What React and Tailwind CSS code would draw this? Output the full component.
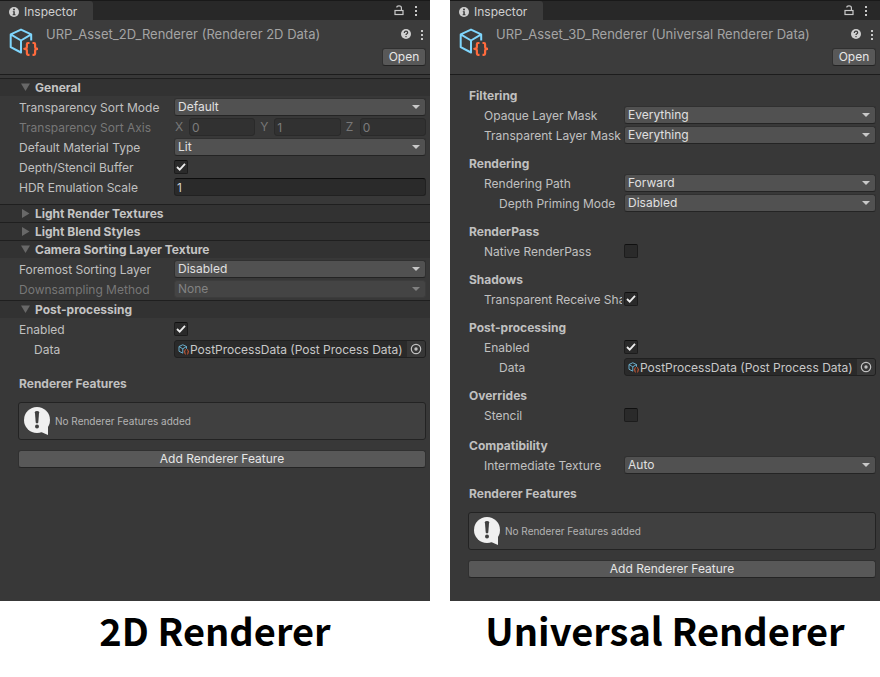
import { useId, useState } from "react";

const INDENT = { 0: "pl-0", 1: "pl-[15px]", 2: "pl-[30px]" };

function InfoIcon() {
  return (
    <svg viewBox="0 0 10 10" className="size-[10px]" aria-hidden="true">
      <circle cx="5" cy="5" r="5" fill="#d0d0d0" />
      <circle cx="5" cy="2.4" r="1" fill="#3a3a3a" />
      <path d="M3.8 4.2H5.8V7.3H6.5V8.2H3.6V7.3H4.3V5.1H3.8Z" fill="#3a3a3a" />
    </svg>
  );
}

function LockIcon() {
  return (
    <svg viewBox="0 0 10 11" className="h-[11px] w-[10px]" fill="none" stroke="#c8c8c8" aria-hidden="true">
      <rect x="1" y="5.5" width="8" height="4" strokeWidth="1.2" />
      <path d="M2.8 2.6C2.8 1.4 3.6 .8 5 .8C6.600 .8 7.400 1.500 7.400 2.800V5.500" strokeWidth="1.2" />
    </svg>
  );
}

function KebabIcon() {
  return (
    <svg viewBox="0 0 4 11" className="h-[11px] w-1" fill="#c8c8c8" aria-hidden="true">
      <rect x="1" y="1" width="2" height="2" />
      <rect x="1" y="5" width="2" height="2" />
      <rect x="1" y="9" width="2" height="2" />
    </svg>
  );
}

function HelpIcon() {
  return (
    <svg viewBox="0 0 10 10" className="size-[10px]" aria-hidden="true">
      <circle cx="5" cy="5" r="5" fill="#d0d0d0" />
      <path d="M3.300 3.900C3.300 2.800 4 2.200 5 2.200S6.700 2.800 6.700 3.700C6.700 4.800 5 4.800 5 6.100" fill="none" stroke="#3a3a3a" strokeWidth="1.200" />
      <rect x="4.400" y="7" width="1.200" height="1.200" fill="#3a3a3a" />
    </svg>
  );
}

function AssetIcon({ small }) {
  return (
    <svg
      viewBox="0 0 30 29"
      className={small ? "h-[11px] w-[11px] shrink-0" : "h-[29px] w-[30px] shrink-0"}
      fill="none"
      strokeLinejoin="round"
      opacity={small ? 0.8 : 1}
      aria-hidden="true"
    >
      <path
        d="M23.200 12.500V6.400L13 1.600L2.700 6.400V19.200L13 24.500V12.500M2.700 6.400L13 12.500L23.200 6.400"
        stroke="#7fd6fd"
        strokeWidth={small ? 2.6 : 2}
      />
      <path
        d="M21.500 15H20Q18.900 15 18.900 16.300V19Q18.900 20.800 16.300 20.800Q18.900 20.800 18.900 22.600V25.600Q18.900 26.900 20 26.900H21.500M24.500 15H26Q27.100 15 27.100 16.300V19Q27.100 20.800 29.700 20.800Q27.100 20.800 27.100 22.600V25.600Q27.100 26.900 26 26.900H24.500"
        stroke="#ff6b3d"
        strokeWidth={small ? 2.6 : 2.2}
      />
    </svg>
  );
}

function BubbleIcon() {
  return (
    <svg viewBox="0 0 26 28" className="h-7 w-[26px] shrink-0" aria-hidden="true">
      <circle cx="13" cy="13" r="13" fill="#f0f0f0" />
      <path d="M16 24.500L24 28V18Z" fill="#f0f0f0" />
      <path d="M10.900 5.200Q10.900 4 13 4T15.100 5.200L14.300 15.600Q14.200 16.400 13 16.400T11.700 15.600Z" fill="#404040" />
      <circle cx="13" cy="19.400" r="2" fill="#404040" />
    </svg>
  );
}

function Row({ label, id, indent = 0, muted, children }) {
  return (
    <div className="flex h-[18px] items-center">
      <label
        htmlFor={id}
        className={`w-[155px] shrink-0 pr-[2px] ${muted ? "text-[#777777]" : "text-[#c0c0c0]"}`}
      >
        <span className={`block overflow-hidden whitespace-nowrap pt-px ${INDENT[indent]}`}>{label}</span>
      </label>
      <div className="flex min-w-0 flex-1 items-center">{children}</div>
    </div>
  );
}

function SelectRow({ label, value, indent, muted }) {
  const id = useId();
  return (
    <Row label={label} id={id} indent={indent} muted={muted}>
      <div className="relative flex-1">
        <select
          id={id}
          disabled={muted}
          defaultValue={value}
          className={`block h-[18px] w-full appearance-none rounded-[3px] border px-[3px] pb-px leading-4 ${
            muted
              ? "border-[#3c3c3c] bg-[#444444] text-[#828282] opacity-100"
              : "border-[#303030] border-b-[#242424] bg-[#515151] text-[#e0e0e0]"
          }`}
        >
          <option>{value}</option>
        </select>
        <svg
          viewBox="0 0 8 4"
          className={`pointer-events-none absolute right-[6px] top-[7px] h-1 w-2 ${muted ? "fill-[#808080]" : "fill-[#c8c8c8]"}`}
          aria-hidden="true"
        >
          <path d="M0 0H8L4 4Z" />
        </svg>
      </div>
    </Row>
  );
}

function CheckRow({ label, checked, indent }) {
  const id = useId();
  return (
    <Row label={label} id={id} indent={indent}>
      <span className="relative block size-[14px]">
        <input
          id={id}
          type="checkbox"
          defaultChecked={checked}
          className="peer block size-[14px] appearance-none rounded-[2px] border border-[#1c1c1c] border-t-[#101010] bg-[#2a2a2a]"
        />
        <svg
          viewBox="0 0 14 14"
          className="pointer-events-none invisible absolute inset-0 size-[14px] peer-checked:visible"
          fill="none"
          stroke="#ececec"
          strokeWidth="1.800"
          aria-hidden="true"
        >
          <path d="M3 7L5.700 9.700L11 3.900" />
        </svg>
      </span>
    </Row>
  );
}

function TextRow({ label, value }) {
  const id = useId();
  return (
    <Row label={label} id={id}>
      <input
        id={id}
        defaultValue={value}
        className="block h-[18px] w-full rounded-[3px] border border-[#212121] border-t-[#0d0d0d] bg-[#2a2a2a] px-[2px] text-[#d2d2d2]"
      />
    </Row>
  );
}

function AxisRow({ label, values }) {
  const id = useId();
  return (
    <Row label={label} id={`${id}X`} muted>
      <div className="grid flex-1 grid-cols-3 gap-1 text-[#777777]">
        {["X", "Y", "Z"].map((axis, i) => (
          <label key={axis} className="flex items-center">
            <span className="w-[15px] shrink-0 pl-px">{axis}</span>
            <input
              id={`${id}${axis}`}
              disabled
              defaultValue={values[i]}
              className="block h-[18px] w-full min-w-0 rounded-[3px] border border-[#2a2a2a] bg-[#313131] px-[2px] text-[#7c7c7c]"
            />
          </label>
        ))}
      </div>
    </Row>
  );
}

function ObjectRow({ label, value, indent }) {
  const id = useId();
  return (
    <Row label={label} id={id} indent={indent}>
      <div className="flex h-[18px] flex-1 items-center overflow-hidden rounded-[3px] border border-[#202020] bg-[#2a2a2a] pl-[3px]">
        <AssetIcon small />
        <input
          id={id}
          readOnly
          defaultValue={value}
          className="h-4 min-w-0 flex-1 bg-transparent pl-px pt-[2px] text-[#c8c8c8]"
        />
        <button type="button" aria-label="Select object" className="grid h-4 w-[18px] place-items-center bg-[#373737]">
          <svg viewBox="0 0 12 12" className="size-3" aria-hidden="true">
            <circle cx="6" cy="6" r="4.700" fill="none" stroke="#c0c0c0" strokeWidth="1.200" />
            <circle cx="6" cy="6" r="1.700" fill="#c0c0c0" />
          </svg>
        </button>
      </div>
    </Row>
  );
}

function Foldout({ title, defaultOpen = false, last, children }) {
  const [open, setOpen] = useState(defaultOpen);
  return (
    <section>
      <h3 className="border-t border-[#1f1f1f] bg-[#323232]">
        <button
          type="button"
          aria-expanded={open}
          onClick={() => setOpen(!open)}
          className="flex h-[17px] w-full items-center gap-[5px] pl-[21px] font-bold text-[#c4c4c4]"
        >
          <svg viewBox="0 0 9 9" className="size-[9px] fill-[#686868]" aria-hidden="true">
            <path d={open ? "M0 0.500H9L4.500 8Z" : "M1 0V9L8.500 4.500Z"} />
          </svg>
          {title}
        </button>
      </h3>
      {open && children && (
        <div className={`flex flex-col gap-[2px] pl-[19px] pr-1 pt-[2px] ${last ? "" : "pb-[2px]"}`}>{children}</div>
      )}
    </section>
  );
}

function Group({ title, children }) {
  return (
    <section className="flex flex-col gap-[2px]">
      <h3 className="h-[18px] pt-px font-bold leading-[18px] text-[#c0c0c0]">{title}</h3>
      {children}
    </section>
  );
}

function Features() {
  return (
    <section className="flex flex-col gap-[9px]">
      <h3 className="h-[19px] font-bold leading-[19px] text-[#c0c0c0]">Renderer Features</h3>
      <div className="-ml-px flex h-[38px] items-center gap-[5px] rounded-[3px] border border-[#232323] bg-[#404040] pl-[5px] text-[10px] text-[#b4b4b4]">
        <BubbleIcon />
        No Renderer Features added
      </div>
      <button
        type="button"
        className="-ml-px mt-px h-[18px] rounded-[3px] border border-[#303030] border-b-[#242424] bg-[#585858] leading-4 text-[#e6e6e6]"
      >
        Add Renderer Feature
      </button>
    </section>
  );
}

function Inspector({ title, caption, children }) {
  return (
    <figure className="flex min-w-0 flex-col">
      <div className="flex min-h-[601px] flex-col bg-[#383838] font-[Inter,'Liberation_Sans',sans-serif] text-[12px] leading-4">
        <div className="flex h-5 justify-between border-t border-[#191919] bg-[#282828]">
          <div className="flex w-[93px] items-center gap-[5px] rounded-tr-[3px] bg-[#3c3c3c] pl-[9px] pt-[3px] text-[#d0d0d0]">
            <InfoIcon />
            Inspector
          </div>
          <div className="flex items-center gap-[10px] pr-[12px]">
            <button type="button" aria-label="Lock"><LockIcon /></button>
            <button type="button" aria-label="Tab menu"><KebabIcon /></button>
          </div>
        </div>
        <header className="flex h-[55px] border-b border-[#1c1c1c] bg-[#3c3c3c] pl-2 pt-[6px]">
          <div className="pt-[2px]">
            <AssetIcon />
          </div>
          <div className="flex min-w-0 flex-1 flex-col pl-2">
            <div className="flex items-center justify-between pr-[6px]">
              <h2 className="whitespace-nowrap text-[13px] leading-4 text-[#a4a4a4]">{title}</h2>
              <div className="flex items-center gap-[9px]">
                <button type="button" aria-label="Help"><HelpIcon /></button>
                <button type="button" aria-label="Asset menu"><KebabIcon /></button>
              </div>
            </div>
            <button
              type="button"
              className="mr-1 mt-[6px] h-[18px] w-[44px] self-end rounded-[3px] border border-[#303030] border-b-[#242424] bg-[#585858] leading-4 text-[#e6e6e6]"
            >
              Open
            </button>
          </div>
        </header>
        {children}
      </div>
      <figcaption className="pt-1 text-center font-['Noto_Sans_CJK_JP','Noto_Sans',sans-serif] text-[38px] font-bold leading-[50px] text-black">
        {caption}
      </figcaption>
    </figure>
  );
}

export default function App() {
  return (
    <main className="grid grid-cols-2 gap-5 bg-white">
      <Inspector title="URP_Asset_2D_Renderer (Renderer 2D Data)" caption="2D Renderer">
        <div className="pt-[3px]">
          <Foldout title="General" defaultOpen>
            <SelectRow label="Transparency Sort Mode" value="Default" />
            <AxisRow label="Transparency Sort Axis" values={["0", "1", "0"]} />
            <SelectRow label="Default Material Type" value="Lit" />
            <CheckRow label="Depth/Stencil Buffer" checked />
            <TextRow label="HDR Emulation Scale" value="1" />
            <div className="h-1" />
          </Foldout>
          <Foldout title="Light Render Textures" />
          <Foldout title="Light Blend Styles" />
          <Foldout title="Camera Sorting Layer Texture" defaultOpen>
            <SelectRow label="Foremost Sorting Layer" value="Disabled" />
            <SelectRow label="Downsampling Method" value="None" muted />
          </Foldout>
          <Foldout title="Post-processing" defaultOpen last>
            <CheckRow label="Enabled" checked />
            <ObjectRow label="Data" value="PostProcessData (Post Process Data)" indent={1} />
          </Foldout>
        </div>
        <div className="pl-[19px] pr-1 pt-4">
          <Features />
        </div>
      </Inspector>
      <Inspector title="URP_Asset_3D_Renderer (Universal Renderer Data)" caption="Universal Renderer">
        <div className="flex flex-col gap-[10px] pl-[19px] pr-1 pt-[11px]">
          <Group title="Filtering">
            <SelectRow label="Opaque Layer Mask" value="Everything" indent={1} />
            <SelectRow label="Transparent Layer Mask" value="Everything" indent={1} />
          </Group>
          <Group title="Rendering">
            <SelectRow label="Rendering Path" value="Forward" indent={1} />
            <SelectRow label="Depth Priming Mode" value="Disabled" indent={2} />
          </Group>
          <Group title="RenderPass">
            <CheckRow label="Native RenderPass" indent={1} />
          </Group>
          <Group title="Shadows">
            <CheckRow label="Transparent Receive Shadows" checked indent={1} />
          </Group>
          <Group title="Post-processing">
            <CheckRow label="Enabled" checked indent={1} />
            <ObjectRow label="Data" value="PostProcessData (Post Process Data)" indent={2} />
          </Group>
          <Group title="Overrides">
            <CheckRow label="Stencil" indent={1} />
            <div />
          </Group>
          <Group title="Compatibility">
            <SelectRow label="Intermediate Texture" value="Auto" indent={1} />
          </Group>
          <Features />
        </div>
      </Inspector>
    </main>
  );
}
